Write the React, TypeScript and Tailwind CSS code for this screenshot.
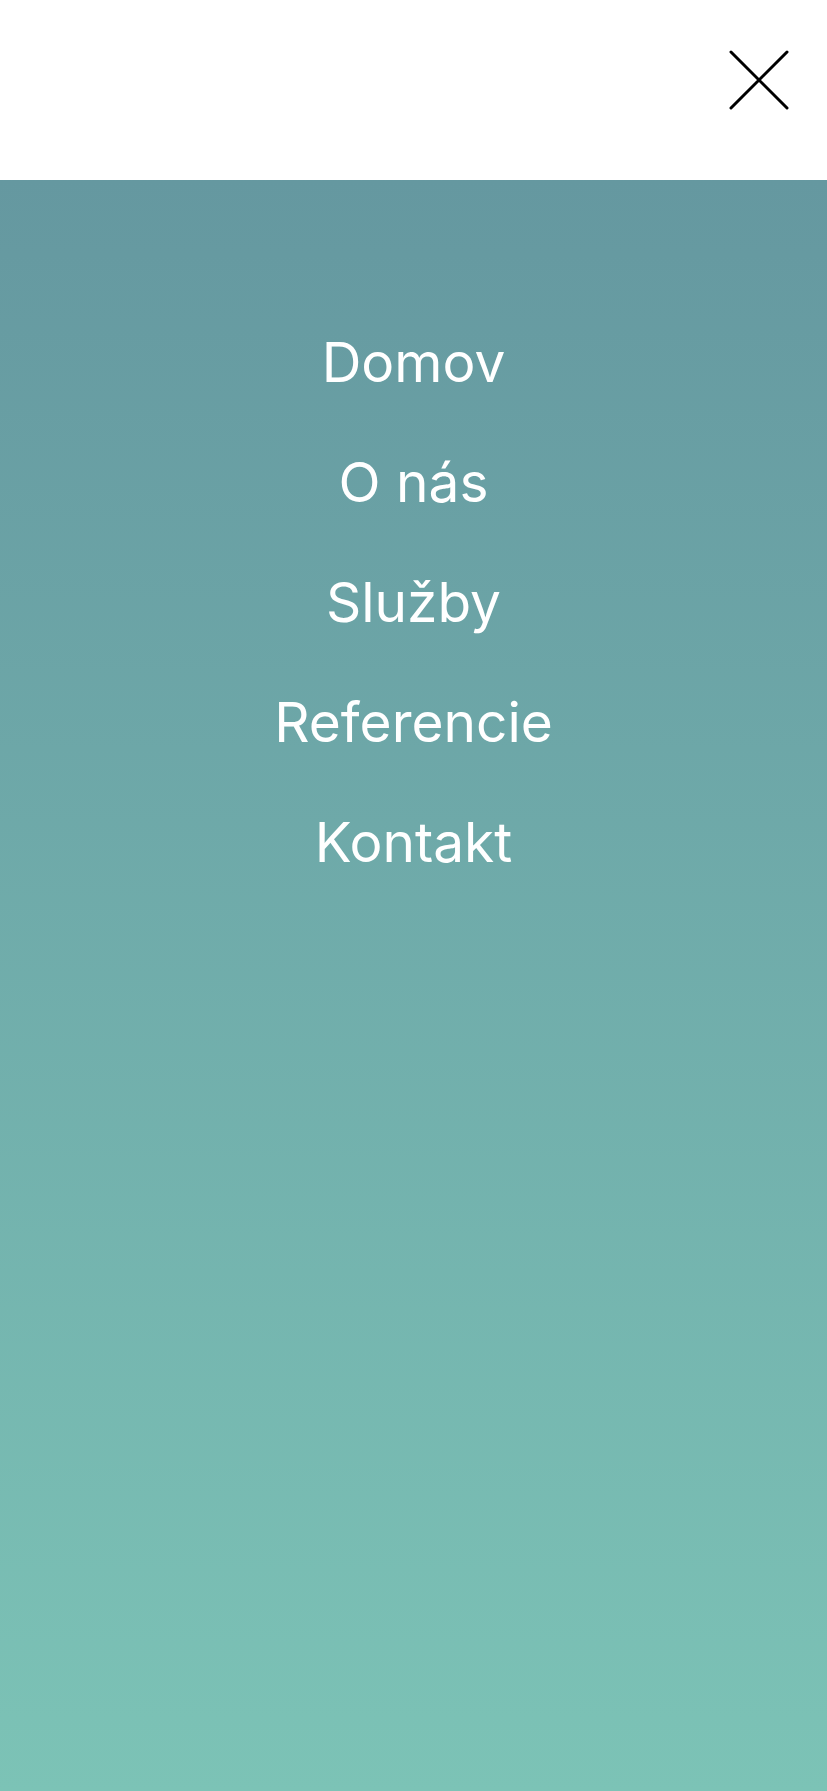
const links = ["Domov", "O nás", "Služby", "Referencie", "Kontakt"];

export default function App() {
  return (
    <div className="min-h-screen flex flex-col font-['Inter',sans-serif]">
      <header className="h-[180px] bg-white flex items-start justify-end shrink-0">
        <button className="mt-[50px] mr-[38px] w-[60px] h-[60px] flex items-center justify-center">
          <svg width="60" height="60" viewBox="0 0 60 60" fill="none">
            <path
              d="M2 2L58 58M58 2L2 58"
              stroke="#000"
              strokeWidth="3"
              strokeLinecap="round"
            />
          </svg>
        </button>
      </header>

      <nav className="flex-1 min-h-[1611px] bg-gradient-to-b from-[#6598a0] to-[#7cc3b6] pt-[122px]">
        <ul className="flex flex-col items-center">
          {links.map((link) => (
            <li key={link} className="h-[120px] leading-[120px]">
              <a href="#" className="text-white text-[55px] font-normal">
                {link}
              </a>
            </li>
          ))}
        </ul>
      </nav>
    </div>
  );
}
